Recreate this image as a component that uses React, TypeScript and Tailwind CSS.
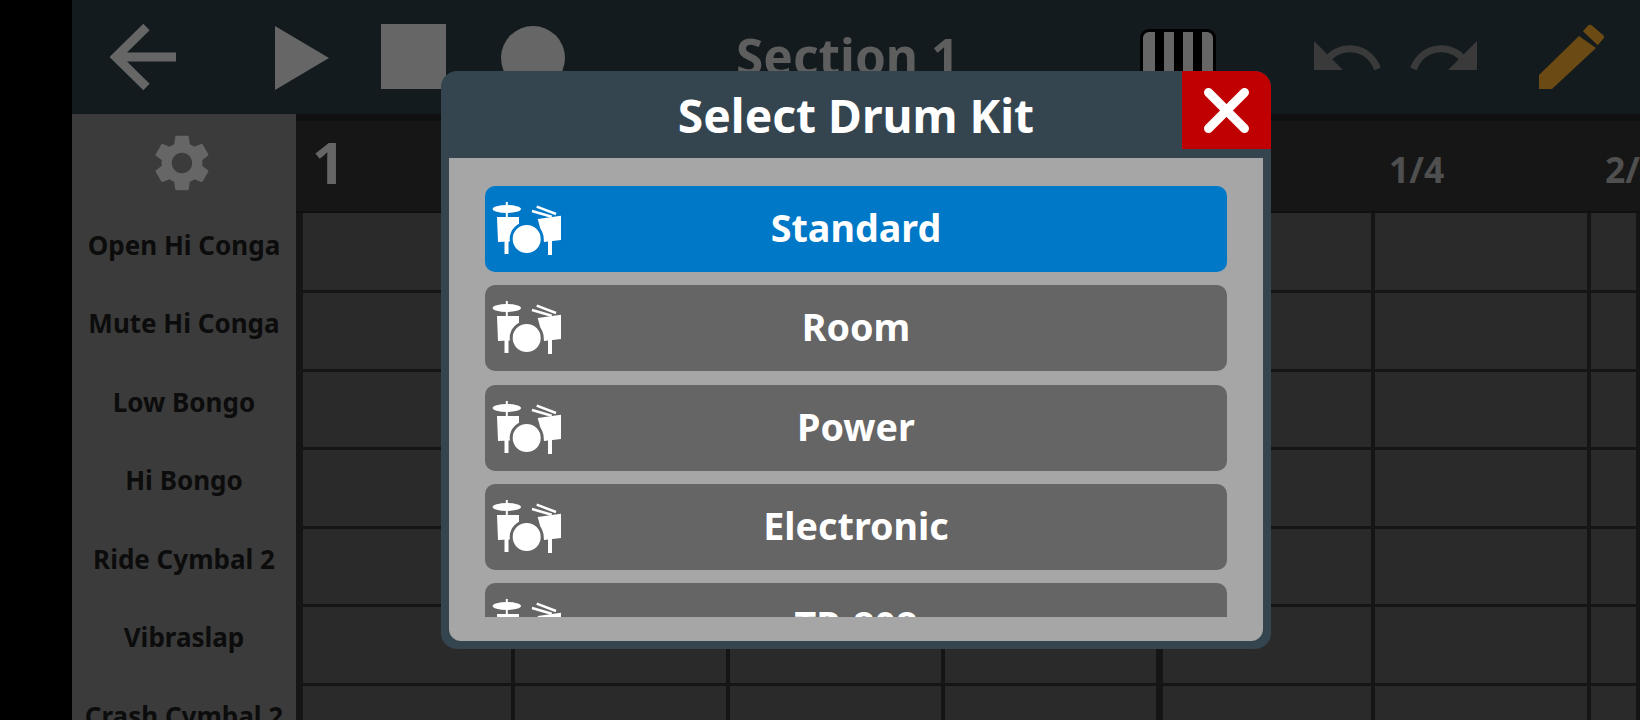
import { MdSettings } from 'react-icons/md'

const LINE = 'border-[#151515]'

const instruments = [
  'Open Hi Conga',
  'Mute Hi Conga',
  'Low Bongo',
  'Hi Bongo',
  'Ride Cymbal 2',
  'Vibraslap',
  'Crash Cymbal 2',
]

const kits = ['Standard', 'Room', 'Power', 'Electronic', 'TR-808']

// cell widths include the line on the right of each cell
const gridCells = ['border-r-4', 'border-r-4', 'border-r-4', 'border-r-[7px]', 'border-r-4', 'border-r-4', 'border-r-4']

const DrumIcon = ({ ring }: { ring: string }) => (
  <svg width="78" height="58" viewBox="0 0 78 58" className="absolute left-[5px] top-[14px]" fill="white">
    <ellipse cx="16.8" cy="9" rx="14.2" ry="4" />
    <rect x="15.8" y="2" width="2" height="16" />
    <polygon points="7,17 29,17 29,41 8,42" />
    <rect x="14.5" y="40" width="4" height="14" />
    <polygon points="47.7,19 71,15.7 71,40 54,42" />
    <rect x="58" y="40" width="4" height="15" />
    <line x1="46.7" y1="6.7" x2="66" y2="14" stroke="white" strokeWidth="2.5" />
    <line x1="42" y1="11" x2="61.7" y2="16.7" stroke="white" strokeWidth="2.5" />
    <circle cx="36.7" cy="39" r="15.5" strokeWidth="3" className={ring} />
  </svg>
)

const TopBar = () => (
  <div className="flex h-[114px] shrink-0 items-start bg-[#131b1e]">
    <svg width="66" height="66" viewBox="0 0 66 66" className="ml-[38px] mt-[24px] shrink-0">
      <path d="M66 33 H8 M36.5 3 L6 33 L36.5 63" fill="none" stroke="#666666" strokeWidth="9" />
    </svg>
    <svg width="54" height="64" viewBox="0 0 54 64" className="ml-[99px] mt-[26px] shrink-0">
      <polygon points="0,0 54,32 0,64" fill="#666666" />
    </svg>
    <div className="ml-[52px] mt-[24px] h-[65px] w-[65px] shrink-0 bg-[#666666]" />
    <div className="ml-[55px] mt-[26px] h-[64px] w-[64px] shrink-0 rounded-full bg-[#666666]" />
    <div className="ml-[171px] mt-[23px] w-[220px] shrink-0 whitespace-nowrap text-center font-['Noto_Sans',sans-serif] text-[49.6px] font-bold leading-[66px] text-[#5e5e5e]">
      Section 1
    </div>
    <div className="ml-[184px] mt-[29px] flex h-[60px] w-[76px] shrink-0 gap-[10px] rounded-[9px] border-[3px] border-black bg-[#666666] pl-[12px]">
      <div className="w-[9px] bg-black" />
      <div className="w-[9px] bg-black" />
      <div className="w-[9px] bg-black" />
    </div>
    <svg width="70" height="30" viewBox="0 0 70 30" className="ml-[98px] mt-[41px] shrink-0">
      <path d="M0 0 L0 29 L29 29 Z" fill="#3a3a3a" />
      <path d="M14 18 C24 4 54 2 63.5 28" fill="none" stroke="#3a3a3a" strokeWidth="7" />
    </svg>
    <svg width="70" height="30" viewBox="0 0 70 30" className="ml-[25px] mt-[41px] shrink-0">
      <path d="M68 0 L68 29 L39 29 Z" fill="#3a3a3a" />
      <path d="M54 18 C44 4 14 2 4.5 28" fill="none" stroke="#3a3a3a" strokeWidth="7" />
    </svg>
    <svg width="66" height="65" viewBox="0 0 66 65" className="ml-[60px] mt-[24px] shrink-0">
      <path d="M0 51 L40 12 L57 24 L13 65 L0 65 Z" fill="#6b4a13" />
      <path d="M44 7.3 L49 1.5 Q51 0 53 1.5 L64 11 Q66 12.5 64.5 14.5 L58.7 21.3 Z" fill="#6b4a13" />
    </svg>
  </div>
)

const Sidebar = () => (
  <div className="flex w-[224px] shrink-0 flex-col bg-[#3b3b3b]">
    <div className="flex h-[92px] shrink-0 items-start justify-center pr-[4px] pt-[15px]">
      <MdSettings size={68} color="#666666" />
    </div>
    {instruments.map((name) => (
      <div
        key={name}
        className="flex h-[78.5px] shrink-0 items-center justify-center whitespace-nowrap font-['Noto_Sans',sans-serif] text-[26px] font-bold text-[#0c0c0c]"
      >
        {name}
      </div>
    ))}
  </div>
)

const Ruler = () => (
  <div className="grid h-[99px] shrink-0 grid-cols-[219px_215px_215px_218px_212px_216px_1fr] overflow-hidden border-b-2 border-t-[7px] border-[#101010] bg-[#161616] font-['Noto_Sans',sans-serif] font-bold">
    <div className="pl-[16px] pt-[2px] text-[58px] leading-[78px] text-[#666666]">1</div>
    <div />
    <div />
    <div />
    <div />
    <div className="pl-[14px] pt-[25px] text-[35.5px] leading-[46px] text-[#4f4f4f]">1/4</div>
    <div className="whitespace-nowrap pl-[14px] pt-[25px] text-[35.5px] leading-[46px] text-[#4f4f4f]">2/4</div>
  </div>
)

const NoteGrid = () => (
  <div className="flex flex-col border-l-[7px] border-[#151515] bg-[#2a2a2a]">
    {[80, 78.5, 78.5, 78.5, 78.5, 78.5, 78.5].map((rowHeight, row) => (
      <div
        key={row}
        className="grid shrink-0 grid-cols-[212px_215px_215px_218px_212px_216px_1fr]"
        style={{ height: rowHeight }}
      >
        {gridCells.map((cell, col) => (
          <div key={col} className={`border-b-[3px] ${LINE} ${cell}`} />
        ))}
      </div>
    ))}
  </div>
)

const KitDialog = () => (
  <div className="absolute left-[441px] top-[71px] flex h-[578px] w-[830px] flex-col overflow-hidden rounded-[16px] bg-[#344550]">
    <div className="relative flex h-[87px] shrink-0 items-center justify-center pt-[2px] font-['Noto_Sans',sans-serif] text-[46.2px] font-bold text-white">
      Select Drum Kit
      <div className="absolute right-0 top-0 flex h-[78px] w-[89px] items-center justify-center rounded-tr-[16px] bg-[#c00000]">
        <svg width="45" height="45" viewBox="0 0 45 45">
          <path d="M4.5 4.5 L40.5 40.5 M40.5 4.5 L4.5 40.5" stroke="white" strokeWidth="9" strokeLinecap="round" />
        </svg>
      </div>
    </div>
    <div className="mx-[8px] mb-[8px] h-[483px] rounded-b-[12px] bg-[#a6a6a6] px-[36px] pb-[24px] pt-[28px]">
      <div className="flex h-[431px] flex-col gap-[13.25px] overflow-hidden">
        {kits.map((kit, i) => (
          <div
            key={kit}
            className={`relative flex h-[86px] shrink-0 items-center justify-center rounded-[10px] pb-[1px] font-['Noto_Sans',sans-serif] text-[37.7px] font-bold text-white ${
              i === 0 ? 'bg-[#0078c8]' : 'bg-[#656565]'
            }`}
          >
            <DrumIcon ring={i === 0 ? 'stroke-[#0078c8]' : 'stroke-[#656565]'} />
            {kit}
          </div>
        ))}
      </div>
    </div>
  </div>
)

export default function App() {
  return (
    <div className="relative flex h-[720px] w-[1640px] overflow-hidden bg-black">
      <div className="w-[72px] shrink-0" />
      <div className="flex min-w-0 flex-1 flex-col">
        <TopBar />
        <div className="flex min-h-0 flex-1">
          <Sidebar />
          <div className="flex min-w-0 flex-1 flex-col">
            <Ruler />
            <NoteGrid />
          </div>
        </div>
      </div>
      <KitDialog />
    </div>
  )
}
